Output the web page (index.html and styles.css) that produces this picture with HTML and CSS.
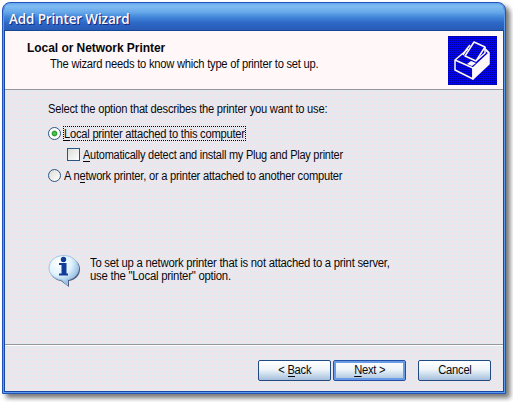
FILE: index.html
```html
<!DOCTYPE html>
<html lang="en">
<head>
<meta charset="utf-8">
<title>Add Printer Wizard</title>
<link rel="stylesheet" href="styles.css">
</head>
<body>
<main class="window">
  <div class="titlebar">Add Printer Wizard</div>
  <header class="header">
    <div class="heading">
      <h1>Local or Network Printer</h1>
      <p class="subtitle"><span>The wizard needs to know which type of printer to set up.</span></p>
    </div>
    <svg class="printer" width="49" height="49" viewBox="0 0 49 49">
      <defs><pattern id="dots" width="2" height="2" patternUnits="userSpaceOnUse"><rect width="2" height="2" fill="#0000ff"/><rect width="1" height="1" fill="#0000a0"/></pattern></defs>
      <rect width="49" height="49" fill="url(#dots)"/>
      <path d="M25 32 41 17V28L25 43Z" fill="#fff8f8" stroke="#fff8f8" stroke-width="1.5" stroke-linejoin="round"/>
      <path d="M20 13 7 24V34L25 43V32L7 24" fill="none" stroke="#fff8f8" stroke-width="1.5" stroke-linejoin="round"/>
      <path d="M37 13 41 17" fill="none" stroke="#fff8f8" stroke-width="2"/>
      <path d="M26 6 37 11 28 25 17 20Z" fill="url(#dots)" stroke="#fff8f8" stroke-width="1.5" stroke-linejoin="round"/>
      <path d="M22 9 18 14 15 19" fill="none" stroke="#fff8f8" stroke-width="1.5"/>
      <path d="M37 11V17L29 24" fill="none" stroke="#fff8f8" stroke-width="1.5"/>
      <path d="M19 28 23 25 28 27 24 30Z" fill="#fff8f8"/>
    </svg>
  </header>
  <section class="content">
    <p class="prompt"><span>Select the option that describes the printer you want to use:</span></p>
    <div class="option local"><i class="radio checked"></i><label class="focus"><span><u>L</u>ocal printer attached to this computer</span></label></div>
    <div class="option detect"><i class="checkbox"></i><label><span><u>A</u>utomatically detect and install my Plug and Play printer</span></label></div>
    <div class="option network"><i class="radio"></i><label><span>A n<u>e</u>twork printer, or a printer attached to another computer</span></label></div>
    <div class="note">
      <svg class="info" width="33" height="34" viewBox="0 0 33 34">
        <defs><radialGradient id="bubble" cx="35%" cy="25%" r="75%"><stop offset="0" stop-color="#fff"/><stop offset=".55" stop-color="#e0f3fc"/><stop offset="1" stop-color="#8bb6e2"/></radialGradient></defs>
        <path d="M17 3C26 3 32 8 32 15C32 22 27 26 21 27L21 33 13 27C6 26 2 21 2 15C2 8 8 3 17 3Z" fill="#4c5f83"/>
        <path d="M16 1.5C24 1.5 30.5 7 30.5 14C30.5 21 25 25 19.5 25.7L19.5 31 13.5 26C6 25 1 20 1 14C1 7 7 1.5 16 1.5Z" fill="url(#bubble)" stroke="#a4c3e0"/>
        <circle cx="15.5" cy="5.5" r="2.7" fill="#123c9a"/>
        <path d="M11 9H18.5V19.5H20V21.5H11V19.5H13.5V11H11Z" fill="#123c9a"/>
      </svg>
      <p><span class="line1">To set up a network printer that is not attached to a print server,</span><br><span class="line2">use the "Local printer" option.</span></p>
    </div>
  </section>
  <footer class="actions">
    <button type="button"><span>&lt; <u>B</u>ack</span></button>
    <button type="button" class="default"><span><u>N</u>ext &gt;</span></button>
    <button type="button" class="cancel"><span>Cancel</span></button>
  </footer>
</main>
</body>
</html>
```
FILE: styles.css
```css
* { box-sizing: border-box; }
body {
  margin: 0;
  height: 402px;
  overflow: hidden;
  background: #fff;
  padding: 2px;
  font: 12px/13px "Liberation Sans", Arial, sans-serif;
  letter-spacing: -0.25px;
  color: #08080c;
}
h1, p { margin: 0; }
span {
  display: inline-block;
  white-space: pre;
  transform: scaleX(0.93);
  transform-origin: 0 0;
}
u { text-decoration: none; box-shadow: inset 0 -1px #08080c; }
.window {
  width: 504px;
  height: 392px;
  display: flex;
  flex-direction: column;
  border: 1px solid #2454b8;
  border-radius: 8px 8px 0 0;
  background: #ebe8ed;
  box-shadow: inset 0 0 0 1px #5b9bea, inset 0 0 0 2px #1747a5, 4px 4px 5px #777;
  padding: 0 2px 2px;
}
.titlebar {
  height: 28px;
  flex: none;
  margin: 0 -1px;
  padding: 8px 5px 0;
  border-radius: 7px 7px 0 0;
  border-bottom: 1px solid #154793;
  background: linear-gradient(#60a6ec 0, #82bdf2 3px, #67a9e9 9px, #4287da 14px, #2d67c6 20px, #2859b4 28px);
  color: #fff8fa;
  font: 600 13.5px/16px "Open Sans", "Noto Sans", sans-serif;
  letter-spacing: -0.15px;
  text-shadow: 1px 1px #172783;
}
.header {
  height: 59px;
  flex: none;
  display: flex;
  justify-content: space-between;
  padding: 5px 6px 0 22px;
  border-bottom: 1px solid #99959d;
  background: #fff7f8;
}
.heading { padding-top: 5px; }
h1 { font-size: 12px; line-height: 15px; letter-spacing: -0.05px; }
.subtitle { padding-left: 23px; line-height: 16px; }
.content {
  height: 255px;
  flex: none;
  padding: 12px 43px 0;
  border-bottom: 1px solid #99959d;
  box-shadow: 0 1px #fff;
}
.content, .actions {
  background-image: radial-gradient(circle at 1.5px 1.5px, #d6e8f3 0.8px, transparent 0.9px), radial-gradient(circle at 1.5px 1.5px, #f3dce2 0.8px, transparent 0.9px);
  background-size: 4px 4px;
  background-position: 0 0, 2px 2px;
}
.prompt { line-height: 14px; }
.option { display: flex; align-items: center; height: 15px; }
.local { margin-top: 10px; }
.detect { margin: 6px 0 0 19px; }
.network { margin-top: 6px; }
.option label { margin-left: 3px; padding-top: 1px; line-height: 13px; }
.detect span { transform: scaleX(0.913); }
.option .focus { width: 183px; height: 15px; border: 1px dotted #000; margin-left: 2px; padding: 0; }
.focus span { line-height: 14px; }
.radio, .checkbox {
  width: 13px;
  height: 13px;
  flex: none;
  border: 1px solid #295781;
  background: linear-gradient(135deg, #dcdcd8, #fff);
}
.radio { border-radius: 50%; }
.checked { background: radial-gradient(circle, #4dc54c 0 1px, #27992b 2.2px, #fff 3.4px); }
.note { display: flex; margin-top: 71px; }
.note p { margin: 3px 0 0 9px; line-height: 13px; }
.note .line1 { transform: scaleX(0.94); }
.note .line2 { transform: scaleX(0.946); }
.actions {
  flex: 1;
  display: flex;
  padding: 14px 0 0 253px;
  margin-top: 1px;
}
button {
  width: 73px;
  height: 21px;
  margin: 0 2px 0 0;
  padding: 0;
  border: 1px solid #214b83;
  border-radius: 2px;
  background: linear-gradient(#fff, #eef4f9 45%, #bfd4e8 80%, #a7bddb);
  font: inherit;
  letter-spacing: inherit;
  color: inherit;
}
button span { transform-origin: 50% 0; }
.default { box-shadow: inset 0 0 0 2px #699be6; border-color: #214fa5; }
.cancel { margin-left: 10px; }
```
